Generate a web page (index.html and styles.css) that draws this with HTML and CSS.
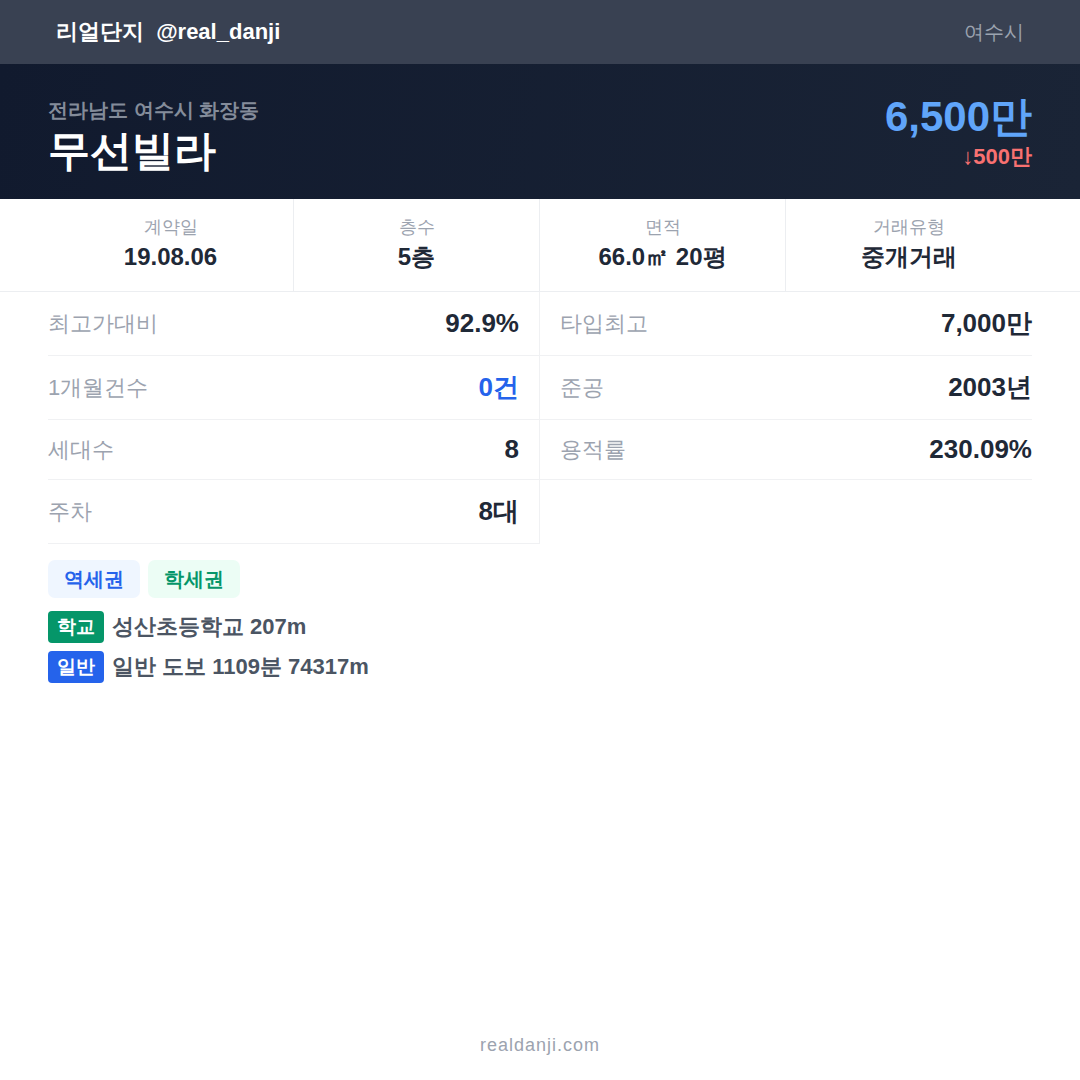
FILE: index.html
```html
<!DOCTYPE html>
<html lang="ko">
  <head>
    <meta charset="utf-8">
    <meta name="viewport" content="width=device-width, initial-scale=1.0">
    <title>무선빌라 - 리얼단지</title>
    <link rel="stylesheet" href="styles.css">
  </head>
  <body>
    <div class="card">
      <div class="topbar">
        <div class="brand"><span>리얼단지</span> <span>@real_danji</span></div>
        <div class="city">여수시</div>
      </div>
      <div class="hero">
        <div>
          <div class="address">전라남도 여수시 화장동</div>
          <h1>무선빌라</h1>
        </div>
        <div class="price-box">
          <div class="price">6,500만</div>
          <div class="change">↓500만</div>
        </div>
      </div>
      <div class="stats">
        <div class="stat">
          <div class="stat-label">계약일</div>
          <div class="stat-value">19.08.06</div>
        </div>
        <div class="stat">
          <div class="stat-label">층수</div>
          <div class="stat-value">5층</div>
        </div>
        <div class="stat">
          <div class="stat-label">면적</div>
          <div class="stat-value">66.0㎡ 20평</div>
        </div>
        <div class="stat">
          <div class="stat-label">거래유형</div>
          <div class="stat-value">중개거래</div>
        </div>
      </div>
      <div class="details">
        <div class="row left"><span class="label">최고가대비</span><span class="value">92.9%</span></div>
        <div class="row right"><span class="label">타입최고</span><span class="value">7,000만</span></div>
        <div class="row left"><span class="label">1개월건수</span><span class="value blue">0건</span></div>
        <div class="row right"><span class="label">준공</span><span class="value">2003년</span></div>
        <div class="row left"><span class="label">세대수</span><span class="value">8</span></div>
        <div class="row right"><span class="label">용적률</span><span class="value">230.09%</span></div>
        <div class="row left"><span class="label">주차</span><span class="value">8대</span></div>
      </div>
      <div class="tags">
        <span class="tag station">역세권</span>
        <span class="tag school">학세권</span>
      </div>
      <div class="nearby">
        <div class="place"><span class="badge school">학교</span>성산초등학교 207m</div>
        <div class="place"><span class="badge general">일반</span>일반 도보 1109분 74317m</div>
      </div>
      <div class="footer">realdanji.com</div>
    </div>
  </body>
</html>
```

FILE: styles.css
```css
* {
  box-sizing: border-box;
  margin: 0;
  padding: 0;
}
html, body {
  background-color: #fff;
  font-family: 'Liberation Sans', sans-serif;
}
.card {
  width: 1080px;
  height: 1080px;
  display: flex;
  flex-direction: column;
}
.topbar {
  height: 64px;
  background-color: #394152;
  display: flex;
  align-items: center;
  justify-content: space-between;
  padding: 0 56px;
}
.brand {
  color: #fff;
  font-size: 22px;
  font-weight: bold;
  word-spacing: 6px;
}
.city {
  color: #9ca3af;
  font-size: 20px;
}
.hero {
  height: 135px;
  background: linear-gradient(100deg, #111a2e 0%, #1a2436 100%);
  display: flex;
  align-items: center;
  justify-content: space-between;
  padding: 0 48px;
}
.address {
  color: #848c9a;
  font-size: 20px;
  font-weight: bold;
  line-height: 31px;
  margin-top: 8px;
}
h1 {
  color: #fff;
  font-size: 42px;
  font-weight: bold;
  line-height: 50px;
}
.price-box {
  text-align: right;
}
.price {
  color: #60a5fa;
  font-size: 42px;
  font-weight: bold;
  line-height: 50px;
}
.change {
  color: #f87171;
  font-size: 22px;
  font-weight: bold;
  line-height: 30px;
}
.stats {
  display: grid;
  grid-template-columns: repeat(4, 1fr);
  padding: 0 48px;
  border-bottom: 1px solid #eceef1;
}
.stat {
  text-align: center;
  padding: 15px 0 17px;
  border-right: 1px solid #eceef1;
}
.stat:first-child {
  margin-left: -48px;
  padding-left: 48px;
}
.stat:last-child {
  border-right: none;
  margin-right: -48px;
  padding-right: 48px;
}
.stat-label {
  color: #9ca3af;
  font-size: 18px;
  line-height: 26px;
}
.stat-value {
  color: #1f2937;
  font-size: 24px;
  font-weight: bold;
  line-height: 34px;
}
.details {
  display: grid;
  grid-template-columns: 1fr 1fr;
  padding: 0 48px;
}
.row {
  display: flex;
  align-items: center;
  justify-content: space-between;
  padding: 14px 0;
  border-bottom: 1px solid #f0f1f3;
}
.row.left {
  padding-right: 20px;
  border-right: 1px solid #f0f1f3;
}
.row.right {
  padding-left: 20px;
}
.label {
  color: #9ca3af;
  font-size: 22px;
}
.value {
  color: #1f2937;
  font-size: 26px;
  font-weight: bold;
}
.value.blue {
  color: #2563eb;
}
.tags {
  display: flex;
  gap: 8px;
  padding: 16px 48px 0;
}
.tag {
  font-size: 20px;
  font-weight: bold;
  line-height: 28px;
  padding: 5px 16px;
  border-radius: 7px;
}
.tag.station {
  background-color: #eff6ff;
  color: #2563eb;
}
.tag.school {
  background-color: #ecfdf5;
  color: #059669;
}
.nearby {
  display: flex;
  flex-direction: column;
  gap: 8px;
  padding: 13px 48px 0;
}
.place {
  display: flex;
  align-items: center;
  gap: 8px;
  color: #4b5563;
  font-size: 22px;
  font-weight: bold;
}
.badge {
  color: #fff;
  font-size: 19px;
  font-weight: bold;
  line-height: 32px;
  height: 32px;
  padding: 0 9px;
  border-radius: 4px;
}
.badge.school {
  background-color: #059669;
}
.badge.general {
  background-color: #2563eb;
}
.footer {
  margin-top: auto;
  text-align: center;
  color: #9ca3af;
  font-size: 18px;
  letter-spacing: 1px;
  padding-bottom: 24px;
}
```
